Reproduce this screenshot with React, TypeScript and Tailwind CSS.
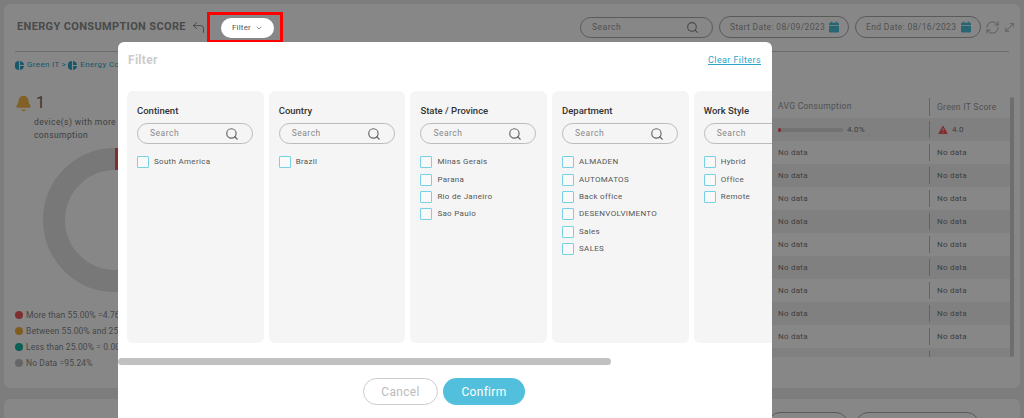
import { ChevronDown, CornerUpLeft, MoveDiagonal, RefreshCw, Search, TriangleAlert, Bell } from 'lucide-react';

const columns = [
  { title: 'Continent', items: ['South America'] },
  { title: 'Country', items: ['Brazil'] },
  { title: 'State / Province', items: ['Minas Gerais', 'Parana', 'Rio de Janeiro', 'Sao Paulo'] },
  { title: 'Department', items: ['ALMADEN', 'AUTOMATOS', 'Back office', 'DESENVOLVIMENTO', 'Sales', 'SALES'] },
  { title: 'Work Style', items: ['Hybrid', 'Office', 'Remote'] },
];

const legend = [
  { color: 'bg-[#f05a5a]', label: 'More than 55.00% =4.76%' },
  { color: 'bg-[#f0b040]', label: 'Between 55.00% and 25.00% =0.00%' },
  { color: 'bg-[#12b5a0]', label: 'Less than 25.00% = 0.00%' },
  { color: 'bg-[#c0c0c0]', label: 'No Data =95.24%' },
];

function CalendarIcon() {
  return (
    <svg width="10" height="12" viewBox="0 0 11 12" className="text-[#4ec0dc] shrink-0" fill="currentColor">
      <rect x="2" y="0" width="1.6" height="2.5" />
      <rect x="7.4" y="0" width="1.6" height="2.5" />
      <path d="M0 2.2a1 1 0 0 1 1-1h9a1 1 0 0 1 1 1V4H0z" />
      <path d="M0 4.8h11V11a1 1 0 0 1-1 1H1a1 1 0 0 1-1-1z" />
    </svg>
  );
}

function GreenIcon() {
  return (
    <svg width="9" height="9" viewBox="0 0 10 10" fill="#2aa6c8" className="shrink-0">
      <path d="M4.4 0v10A5 5 0 0 1 4.4 0z" />
      <path d="M5.6 0A5 5 0 0 1 10 4.4H5.6z" />
      <path d="M5.6 5.6H10A5 5 0 0 1 5.6 10z" />
    </svg>
  );
}

function DatePill({ label, width }: { label: string; width: string }) {
  return (
    <div className={`${width} h-[22px] rounded-full border border-[#aaa] flex items-center justify-between pl-[10px] pr-[9px] text-[8.5px] tracking-[0.35px] text-[#999] whitespace-nowrap`}>
      <span>{label}</span>
      <CalendarIcon />
    </div>
  );
}

function FilterColumn({ title, items }: { title: string; items: string[] }) {
  return (
    <div className="w-[136.5px] shrink-0 h-[252px] rounded-md bg-[#f5f5f5] px-[10px] pt-[13px]">
      <div className="text-[9.5px] leading-[13px] text-[#333] font-medium">{title}</div>
      <div className="mt-[6px] w-[116px] h-[21px] rounded-full border border-[#bbb] flex items-center justify-between pl-[12px] pr-[13px] text-[8.5px] tracking-[0.5px] text-[#888]">
        <span>Search</span>
        <Search size={14} strokeWidth={2} className="text-[#666] shrink-0" />
      </div>
      <div className="mt-[12px] flex flex-col gap-[5px]">
        {items.map((item) => (
          <div key={item} className="h-[12.4px] flex items-center gap-[5px] text-[8px] tracking-[0.3px] text-[#555] whitespace-nowrap">
            <span className="w-[12px] h-[12px] shrink-0 border border-[#78d0e4] rounded-[1px] bg-white/40" />
            {item}
          </div>
        ))}
      </div>
    </div>
  );
}

export default function App() {
  const rows = Array.from({ length: 11 }, (_, i) => i);

  return (
    <div className="relative w-[1024px] h-[418px] overflow-hidden bg-[#ececec] font-['Roboto',sans-serif]">
      {/* page behind the dialog */}
      <div className="mx-[4px] mt-[4px] h-[384px] rounded-md bg-white px-[11px]">
        <div className="h-[48px] border-b border-[#ccc] flex items-center">
          <div className="pl-[2px] w-[171px] text-[11px] font-bold tracking-[0.35px] text-[#8c8c8c] whitespace-nowrap">ENERGY CONSUMPTION SCORE</div>
          <CornerUpLeft size={15} strokeWidth={1.5} className="ml-[5px] text-[#888]" />
          <div className="relative z-20 ml-[1px] w-[76px] h-[31px] -mt-[1px] border-[3px] border-[#f00] flex items-center pl-[11px] pt-[1px]">
            <div className="w-[53px] h-[20px] rounded-full bg-white flex items-center justify-center gap-[4px] text-[8px] tracking-[0.2px] text-[#555]">
              Filter
              <ChevronDown size={8} />
            </div>
          </div>
          <div className="ml-auto flex items-center gap-[6px] -mr-[7px] -mt-[1px]">
            <div className="w-[133px] h-[21px] rounded-full border border-[#aaa] flex items-center justify-between pl-[11px] pr-[13px] text-[8.5px] tracking-[0.5px] text-[#999]">
              <span>Search</span>
              <Search size={13} strokeWidth={2} className="text-[#888]" />
            </div>
            <DatePill label="Start Date: 08/09/2023" width="w-[130px]" />
            <DatePill label="End Date: 08/16/2023" width="w-[126px]" />
            <div className="flex items-center gap-[3px] -ml-[2px] text-[#aaa]">
              <RefreshCw size={15} strokeWidth={1.5} />
              <MoveDiagonal size={13} strokeWidth={1.5} />
            </div>
          </div>
        </div>

        <div className="flex justify-between">
          <div className="w-[300px]">
            <div className="mt-[7px] flex items-center gap-[2px] text-[8px] tracking-[0.35px] text-[#2aa6c8]">
              <GreenIcon />
              <span className="ml-[1px]">Green IT &gt;</span>
              <GreenIcon />
              <span className="ml-[1px]">Energy Consumption</span>
            </div>
            <div className="mt-[22px] flex items-center gap-[4px]">
              <Bell size={17} fill="#f5b84a" className="text-[#f5b84a]" />
              <span className="text-[16px] leading-[20px] text-[#666]">1</span>
            </div>
            <div className="mt-[3px] ml-[19px] w-[160px] text-[8.5px] leading-[13px] tracking-[0.4px] text-[#777]">device(s) with more than 55% of consumption</div>
            <div className="relative ml-[28px] mt-[6px] w-[144px] h-[144px] rounded-full border-[22px] border-[#e2e2e2]">
              <div className="absolute left-[50px] -top-[22px] w-[8px] h-[22px] bg-[#f05a5a]" />
            </div>
            <div className="mt-[17px] flex flex-col gap-[3.5px]">
              {legend.map((l) => (
                <div key={l.label} className="flex items-center gap-[3px] h-[12.5px] text-[8.5px] tracking-[0.1px] text-[#888] whitespace-nowrap">
                  <span className={`w-[8px] h-[8px] rounded-full ${l.color}`} />
                  {l.label}
                </div>
              ))}
            </div>
          </div>

          <div className="relative w-[242px] h-[304px] mt-[1px] -mr-[5px] pr-[4px] overflow-hidden">
            <div className="absolute right-0 top-[44px] w-[4px] h-[260px] rounded-full bg-[#d0d0d0]" />
            <div className="mt-[42px] h-[23px] flex items-center text-[8.5px] tracking-[0.3px] text-[#999]">
              <div className="w-[157px] pl-[6px]">AVG Consumption</div>
              <div className="pl-[7px] border-l border-[#bbb] leading-[18px]">Green IT Score</div>
            </div>
            {rows.map((i) => (
              <div key={i} className={`h-[23px] flex items-center text-[8px] tracking-[0.25px] text-[#777] ${i % 2 === 0 ? 'bg-[#f2f2f2]' : ''}`}>
                <div className="w-[157px] pl-[6px] flex items-center">
                  {i === 0 ? (
                    <>
                      <div className="w-[65px] h-[4px] rounded-full bg-[#d8d8d8]">
                        <div className="w-[3px] h-[4px] rounded-full bg-[#f05a5a]" />
                      </div>
                      <span className="ml-[4px]">4.0%</span>
                    </>
                  ) : (
                    'No data'
                  )}
                </div>
                <div className="pl-[7px] h-[17px] border-l border-[#bbb] flex items-center gap-[3px]">
                  {i === 0 ? (
                    <>
                      <TriangleAlert size={12} fill="#f05a5a" stroke="#fff" strokeWidth={1.5} />
                      4.0
                    </>
                  ) : (
                    'No data'
                  )}
                </div>
              </div>
            ))}
          </div>
        </div>
      </div>
      <div className="mx-[4px] mt-[11px] h-[40px] rounded-md bg-white flex justify-end pr-[41px] pt-[13px] gap-[8px]">
        <div className="w-[80px] h-[24px] rounded-full border border-[#aaa]" />
        <div className="w-[123px] h-[24px] rounded-full border border-[#aaa]" />
      </div>

      {/* dimmed backdrop */}
      <div className="absolute inset-0 z-10 bg-black/[.47]" />

      {/* filter dialog */}
      <div className="absolute z-30 left-[118px] top-[42px] w-[654px] h-[400px] rounded-t-md bg-white overflow-hidden">
        <div className="h-[49px] pl-[10px] pr-[11px] pt-[11px] flex items-start justify-between">
          <div className="text-[12px] leading-[14px] font-bold text-[#ccc] tracking-[0.3px]">Filter</div>
          <div className="text-[9px] leading-[14px] tracking-[0.4px] text-[#2aa6c8] underline">Clear Filters</div>
        </div>
        <div className="flex gap-[5.2px] pl-[9px]">
          {columns.map((c) => (
            <FilterColumn key={c.title} title={c.title} items={c.items} />
          ))}
        </div>
        <div className="mt-[15px] w-[493px] h-[7px] rounded-full bg-[#c1c1c1]" />
        <div className="mt-[13px] flex justify-center gap-[5px] pr-[2px]">
          <button className="w-[75px] h-[27px] rounded-full border border-[#ccc] text-[12px] tracking-[0.3px] text-[#bbb]">Cancel</button>
          <button className="w-[82px] h-[27px] rounded-full bg-[#52c0dc] text-[12px] tracking-[0.3px] text-white">Confirm</button>
        </div>
      </div>
    </div>
  );
}
